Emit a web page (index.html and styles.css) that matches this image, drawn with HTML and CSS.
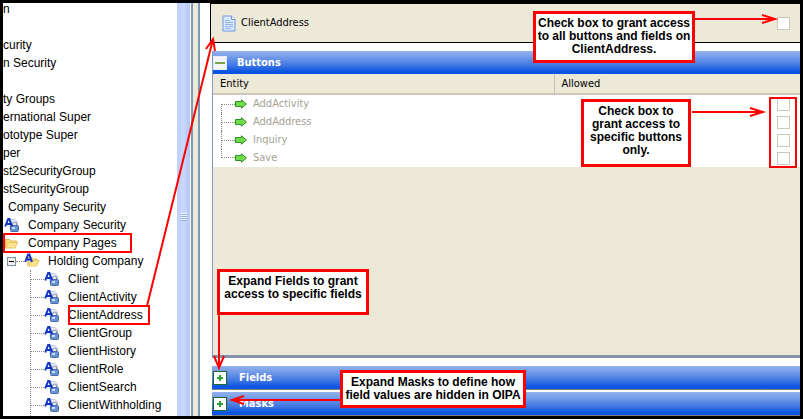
FILE: index.html
```html
<!doctype html>
<html lang="en">
<head>
	<meta charset="UTF-8">
	<title>Company Security</title>
	<link rel="stylesheet" href="styles.css">
</head>
<body>
	<!-- shared icons -->
	<svg class="defs" width="0" height="0">
		<symbol id="lock" viewBox="0 0 16 16">
			<path d="M6 2.500h5l2.500 2.500v7H6z" fill="#eef1f6" stroke="#b4bccb" stroke-width=".8"/>
			<path d="M8.500 9V7a2 2 0 0 1 4 0V9" fill="none" stroke="#8b98ad" stroke-width="1.200"/>
			<rect x="6.500" y="8.500" width="8" height="6" rx="1" fill="#6a92d2" stroke="#466aa5"/>
			<rect x="8" y="10" width="3" height="2" fill="#c8dcf8"/>
			<path d="M1.200 9.500L4.200 2h1.200L8 9.500M2.500 7h4.800" fill="none" stroke="#1134c8" stroke-width="2"/>
		</symbol>
		<symbol id="folder" viewBox="0 0 16 16">
			<path d="M1.500 13V4.500h4L7 6h5.500v2" fill="#f6dc82" stroke="#dcb650"/>
			<path d="M1.500 13L4.500 7.500H13.500L11 13z" fill="#fbe28c" stroke="#e8c766"/>
		</symbol>
		<symbol id="afolder" viewBox="0 0 16 16">
			<path d="M4 13V4.500h4L9.500 6H13v2" fill="#f6dc82" stroke="#dcb650"/>
			<path d="M4.500 13L7 7.500H15L12.500 13z" fill="#fbe28c" stroke="#e8c766"/>
			<path d="M1.200 9L4.200 1.500h1.200L8 9M2.500 6.500h4.800" fill="none" stroke="#1134c8" stroke-width="2"/>
		</symbol>
		<symbol id="arrow" viewBox="0 0 12 10">
			<path d="M.5 2.500h6V.8L11.400 5 6.500 9.200V7.500h-6z" fill="#6fdc4b" stroke="#2f8f24"/>
		</symbol>
	</svg>

	<nav class="tree">
		<ul>
			<li class="cut">n</li>
			<li class="cut"></li>
			<li class="cut">curity</li>
			<li class="cut">n Security</li>
			<li class="cut"></li>
			<li class="cut">ty Groups</li>
			<li class="cut">ernational Super</li>
			<li class="cut">ototype Super</li>
			<li class="cut">per</li>
			<li class="cut">st2SecurityGroup</li>
			<li class="cut">stSecurityGroup</li>
			<li class="group">Company Security</li>
			<li class="node"><svg class="icon"><use href="#lock"/></svg>Company Security</li>
			<li class="node"><svg class="icon"><use href="#folder"/></svg>Company Pages</li>
			<li class="holding"><button class="fold" aria-label="Collapse"></button><span class="dots"></span><svg class="icon"><use href="#afolder"/></svg>Holding Company</li>
		</ul>
		<ul class="pages">
			<li><svg class="icon"><use href="#lock"/></svg>Client</li>
			<li><svg class="icon"><use href="#lock"/></svg>ClientActivity</li>
			<li><svg class="icon"><use href="#lock"/></svg>ClientAddress</li>
			<li><svg class="icon"><use href="#lock"/></svg>ClientGroup</li>
			<li><svg class="icon"><use href="#lock"/></svg>ClientHistory</li>
			<li><svg class="icon"><use href="#lock"/></svg>ClientRole</li>
			<li><svg class="icon"><use href="#lock"/></svg>ClientSearch</li>
			<li><svg class="icon"><use href="#lock"/></svg>ClientWithholding</li>
		</ul>
	</nav>
	<div class="scrollbar"><span class="grip"></span></div>
	<div class="splitter"></div>

	<main class="detail">
		<header class="entity">
			<svg width="14" height="17" viewBox="0 0 14 17">
				<path d="M1 1h8.500L13 4.500V16H1z" fill="#d9e8fc" stroke="#6d9be0"/>
				<path d="M9.500 1v3.500H13" fill="#fff" stroke="#6d9be0"/>
				<path d="M3 5.500h5M3 7.500h8M3 9.500h8M3 11.500h8M3 13.500h6" stroke="#8fb3ea"/>
			</svg>
			<label for="all">ClientAddress</label>
			<input type="checkbox" id="all">
		</header>

		<section class="panel open">
			<button class="bar"><span class="sign minus"></span>Buttons</button>
			<table>
				<thead>
					<tr><th class="name">Entity</th><th>Allowed</th></tr>
				</thead>
				<tbody>
					<tr>
						<td><span class="branch"></span><svg class="arrow"><use href="#arrow"/></svg><label for="b1">AddActivity</label></td>
						<td class="allow"><input type="checkbox" id="b1"></td>
					</tr>
					<tr>
						<td><span class="branch"></span><svg class="arrow"><use href="#arrow"/></svg><label for="b2">AddAddress</label></td>
						<td class="allow"><input type="checkbox" id="b2"></td>
					</tr>
					<tr>
						<td><span class="branch"></span><svg class="arrow"><use href="#arrow"/></svg><label for="b3">Inquiry</label></td>
						<td class="allow"><input type="checkbox" id="b3"></td>
					</tr>
					<tr>
						<td><span class="branch"></span><svg class="arrow"><use href="#arrow"/></svg><label for="b4">Save</label></td>
						<td class="allow"><input type="checkbox" id="b4"></td>
					</tr>
				</tbody>
			</table>
		</section>
		<section class="panel"><button class="bar"><span class="sign plus"></span>Fields</button></section>
		<section class="panel"><button class="bar"><span class="sign plus"></span>Masks</button></section>
	</main>

	<!-- notes drawn over the window -->
	<svg class="marks">
		<rect x="4" y="234" width="127" height="18"/>
		<rect x="69" y="306" width="80" height="18"/>
		<rect x="770" y="98" width="26" height="69"/>
		<path d="M147 306L213 39M206 49L213 39L215 51"/>
		<path d="M695 19H774M762 15L775 19L762 23"/>
		<path d="M692 112H762M750 108L763 112L750 116"/>
		<path d="M219 315V367M214 356L219 368L224 356"/>
		<path d="M340 400H233M244 396L232 400L244 404"/>
	</svg>
	<p class="note all">Check box to grant access<br>to all buttons and fields on<br>ClientAddress.</p>
	<p class="note some">Check box to<br>grant access to<br>specific buttons<br>only.</p>
	<p class="note fields">Expand Fields to grant<br>access to specific fields</p>
	<p class="note masks">Expand Masks to define how<br>field values are hidden in OIPA</p>
</body>
</html>
```
FILE: styles.css
```css
*{
	box-sizing: border-box;
}
body{
	margin: 0;
	height: 100vh;
	border: 3px solid #000;
	display: flex;
	overflow: hidden;
	background: #fff;
	font: 12px/18px "Liberation Sans", Arial, sans-serif;
	color: #000;
}
.defs{
	position: absolute;
}
button{
	padding: 0;
	border: 0;
	font: inherit;
}

/* left tree */
.tree{
	flex: 0 0 174px;
	margin-top: -3px;
	overflow: hidden;
	white-space: nowrap;
}
.tree ul{
	margin: 0;
	padding: 0;
	list-style: none;
}
.tree li{
	height: 18px;
	display: flex;
	align-items: center;
}
.tree .group{
	padding-left: 5px;
}
.icon{
	width: 16px;
	height: 16px;
	margin-right: 8px;
	flex: none;
}
.node{
	padding-left: 1px;
}
.tree .holding{
	padding-left: 4px;
}
.fold{
	width: 9px;
	height: 9px;
	border: 1px solid #7b8fa8;
	background: linear-gradient(#000, #000) center / 5px 1px no-repeat #f2f1ea;
}
.dots{
	width: 8px;
	border-top: 1px dotted #888;
}
.tree .pages{
	margin-left: 27px;
	padding-bottom: 18px;
	border-left: 1px dotted #888;
}
.pages li::before{
	content: "";
	width: 13px;
	border-top: 1px dotted #888;
}
.scrollbar{
	flex: 0 0 13px;
	display: flex;
	align-items: center;
	justify-content: center;
	padding-top: 14px;
	background: linear-gradient(90deg, #c0cff8, #c9d8fd 50%, #b3c6f3);
}
.grip{
	width: 7px;
	height: 8px;
	background: repeating-linear-gradient(#f2f6ff 0 1px, #98b0e8 1px 2px);
}
.splitter{
	flex: 0 0 9px;
	margin-left: 1px;
	border: solid #7b9ab8;
	border-width: 0 2px;
	background: #ece9d8;
}

/* right side */
.detail{
	flex: 1;
	margin-left: 10px;
	display: flex;
	flex-direction: column;
	font: 11px/18px "DejaVu Sans Condensed", "DejaVu Sans", Tahoma, sans-serif;
}
.entity{
	height: 40px;
	padding: 0 10px 0 11px;
	display: flex;
	align-items: center;
	gap: 5px;
	border: solid #000;
	border-width: 1px 0 1px 1px;
	background: #ece9d8;
}
input{
	appearance: none;
	width: 13px;
	height: 13px;
	margin: 0;
	border: 1px solid #cac8bb;
	background: #fff;
}
.entity input{
	margin-left: auto;
}
.panel{
	margin-left: 2px;
	margin-bottom: 2px;
	border-bottom: 1px solid #808080;
}
.panel:last-child{
	margin-bottom: 0;
}
.panel.open{
	flex: 1;
	margin: 8px 0 8px 2px;
	border-left: 1px solid #8398c4;
	border-bottom: 3px solid #8592ab;
	background: #ece9d8;
}
.bar{
	width: 100%;
	height: 23px;
	display: flex;
	align-items: center;
	color: #fff;
	font-weight: bold;
	background: linear-gradient(#93b1ec, #7ca1ea 20%, #3c74e2 65%, #0a54e2 90%, #0a54e2);
}
.sign{
	width: 14px;
	height: 14px;
	margin: 0 12px 0 1px;
	border: 1px solid #1d6a2a;
	background: #fff;
}
.minus{
	margin: 0 10px 0 0;
	border-color: #e4edf7;
	background: linear-gradient(#7ba34c, #7ba34c) center / 10px 2px no-repeat #f1f6fa;
}
.plus{
	background: linear-gradient(#2fa035, #2fa035) center / 6px 2px no-repeat, linear-gradient(#2fa035, #2fa035) center / 2px 6px no-repeat #fff;
}
table{
	width: 100%;
	table-layout: fixed;
	border-collapse: collapse;
}
th{
	height: 20px;
	padding: 0 7px;
	text-align: left;
	font-weight: normal;
	border-bottom: 2px solid #cdc9b9;
}
.name{
	width: 341px;
	border-right: 1px solid #c6c3b4;
}
td{
	height: 18px;
	padding: 0;
	background: #fff;
	color: #a5a294;
}
td:first-child{
	display: flex;
	align-items: center;
	padding-left: 8px;
}
.branch{
	width: 14px;
	height: 18px;
	border-left: 1px dotted #888;
	background: repeating-linear-gradient(90deg, #888 0 1px, transparent 1px 2px) center / 100% 1px no-repeat;
}
tr:first-child .branch{
	height: 9px;
	align-self: flex-end;
	background-position: top;
}
tr:last-child .branch{
	height: 9px;
	align-self: flex-start;
	background-position: bottom;
}
.arrow{
	width: 12px;
	height: 10px;
	margin-right: 6px;
}
.allow{
	padding-right: 10px;
	line-height: 0;
	text-align: right;
}

/* notes */
.marks{
	position: absolute;
	left: 0;
	top: 0;
	width: 100%;
	height: 100%;
	fill: none;
	stroke: #f00;
	stroke-width: 2;
	pointer-events: none;
}
.note{
	position: absolute;
	margin: 0;
	padding: 3px 0;
	border: 3px solid #f00;
	background: #fff;
	text-align: center;
	font-weight: bold;
	line-height: 13px;
	white-space: nowrap;
}
.note.all{
	left: 533px;
	top: 11px;
	width: 162px;
	height: 52px;
}
.note.some{
	left: 581px;
	top: 99px;
	width: 110px;
	height: 68px;
}
.note.fields{
	left: 217px;
	top: 269px;
	width: 152px;
	height: 46px;
}
.note.masks{
	left: 340px;
	top: 370px;
	width: 186px;
	height: 38px;
}
```
